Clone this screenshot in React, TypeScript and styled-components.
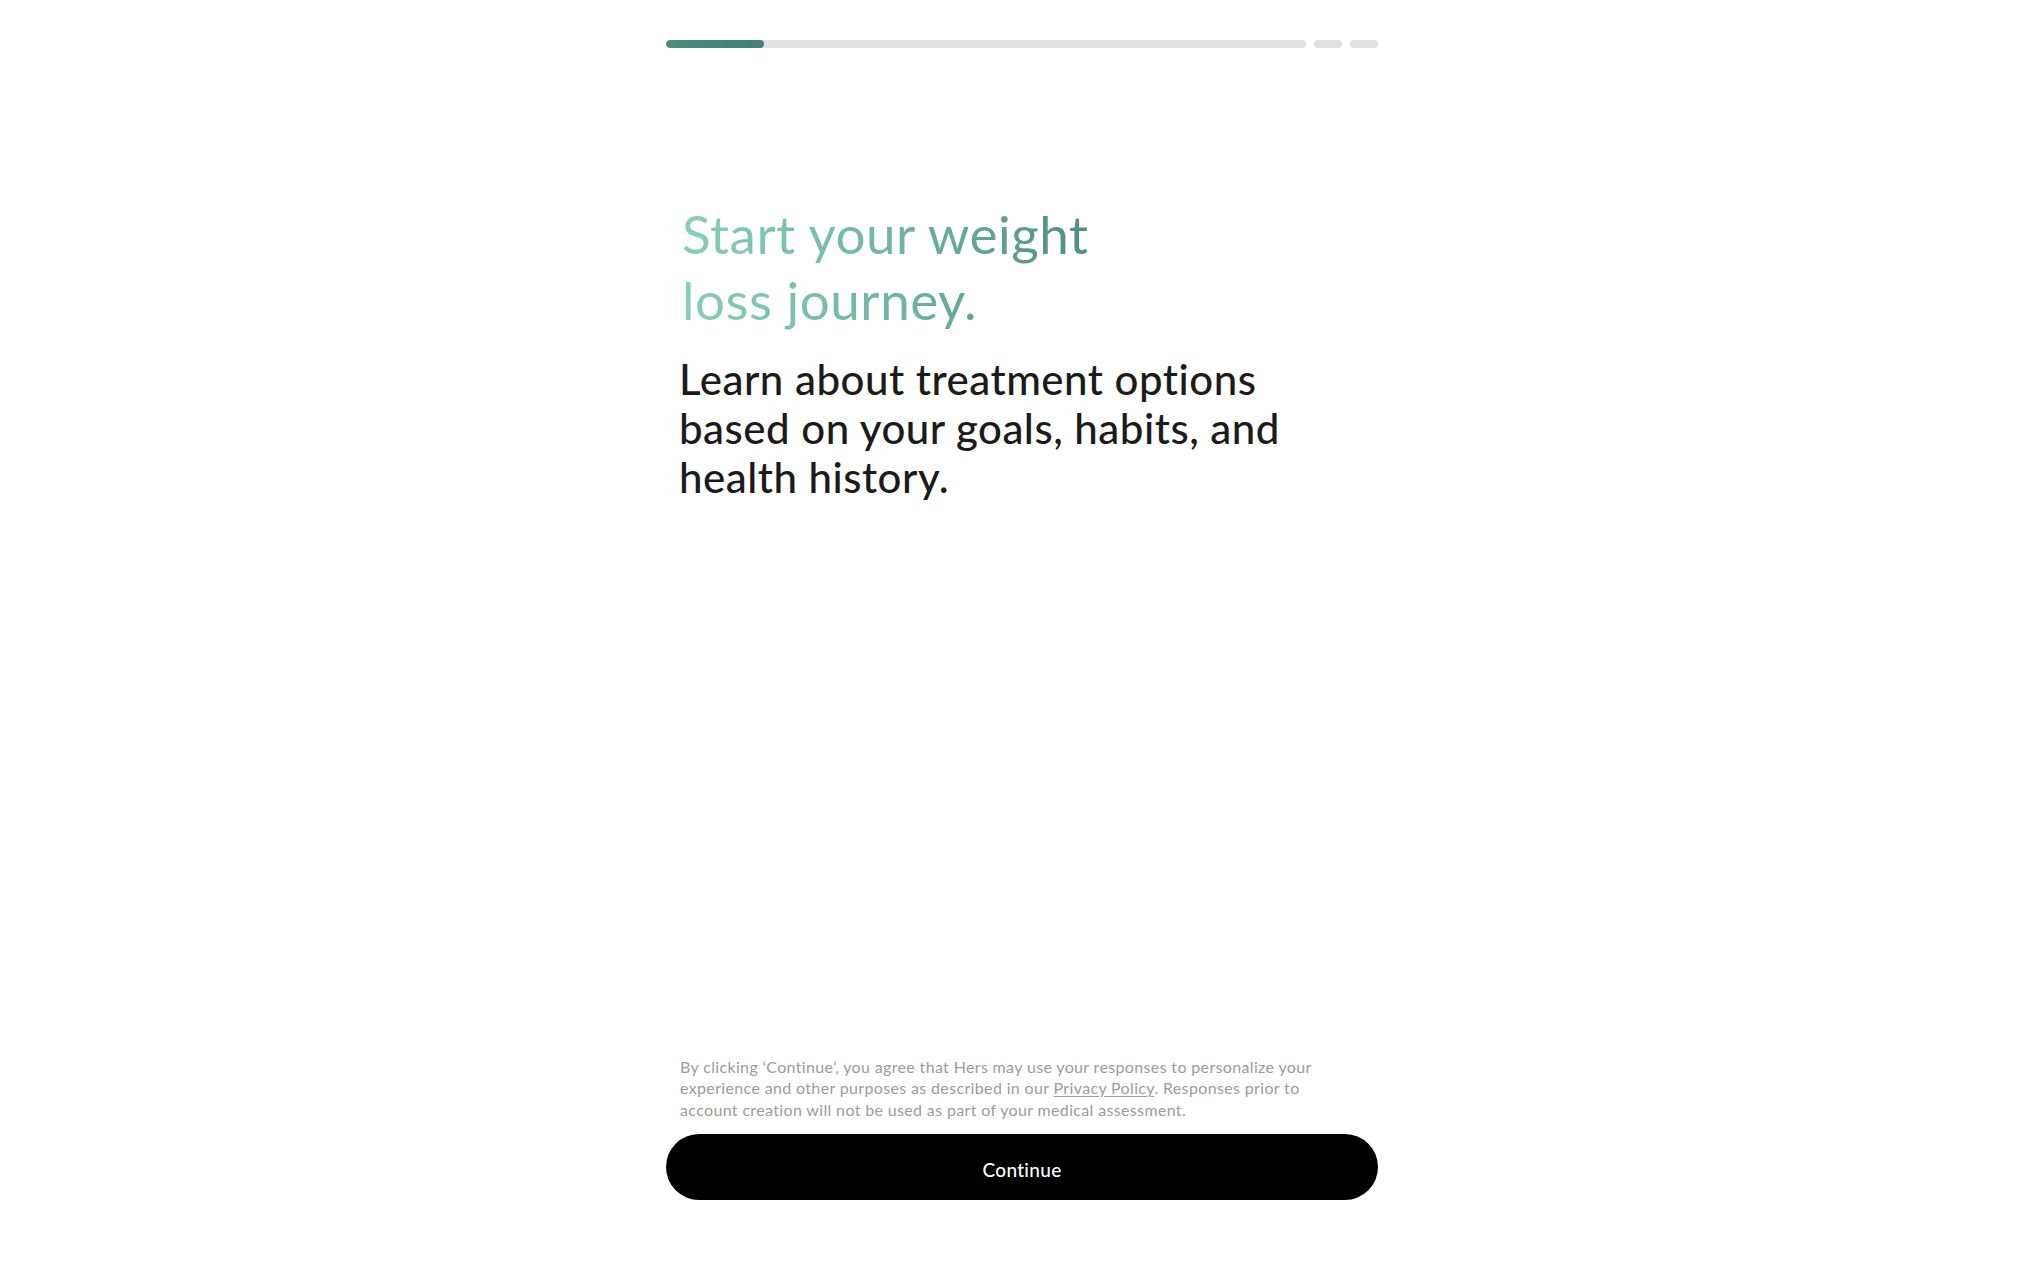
import React from "react";
import styled, { createGlobalStyle } from "styled-components";

const GlobalStyle = createGlobalStyle`
  html, body, #root {
    margin: 0;
    padding: 0;
    height: 100%;
    background: #ffffff;
  }
  body {
    font-family: Lato, "Noto Sans", sans-serif;
    -webkit-font-smoothing: antialiased;
  }
`;

const Page = styled.div`
  display: flex;
  justify-content: center;
  height: 100vh;
`;

const Column = styled.div`
  display: flex;
  flex-direction: column;
  width: 712px;
  height: 100%;
`;

const Progress = styled.div`
  display: flex;
  gap: 8px;
  margin-top: 40px;
`;

const Segment = styled.div<{ $grow?: boolean }>`
  position: relative;
  height: 8px;
  border-radius: 4px;
  background: #e1e1e1;
  overflow: hidden;
  flex: ${(p) => (p.$grow ? "1 1 auto" : "0 0 28px")};
`;

const Fill = styled.div`
  height: 100%;
  border-radius: 4px;
  background: linear-gradient(90deg, #4d8c82, #447f77);
`;

const Content = styled.div`
  padding: 0 16px;
`;

const Heading = styled.h1`
  display: inline-block;
  margin: 153px 0 0;
  font-size: 53px;
  line-height: 66px;
  font-weight: 400;
  letter-spacing: 0.5px;
  background: linear-gradient(90deg, #88ceb8 0%, #6fb3a4 55%, #4f8d86 100%);
  -webkit-background-clip: text;
  background-clip: text;
  color: transparent;
`;

const Lead = styled.p`
  margin: 22px 0 0 -3px;
  font-size: 42px;
  line-height: 49px;
  font-weight: 500;
  color: #1b1b1b;
  letter-spacing: 0.5px;
`;

const Spacer = styled.div`
  flex: 1;
`;

const Legal = styled.p`
  margin: 0 0 14px;
  padding: 0 30px 0 14px;
  font-size: 16px;
  line-height: 21.5px;
  letter-spacing: 0.35px;
  color: #9c9c9c;
`;

const LegalLink = styled.a`
  color: inherit;
  text-decoration: underline;
  text-underline-offset: 2px;
`;

const ContinueButton = styled.button`
  height: 66px;
  margin-bottom: 66px;
  padding: 4px 0 0;
  border: none;
  border-radius: 33px;
  background: #000000;
  color: #ffffff;
  font-family: inherit;
  font-size: 19px;
  font-weight: 500;
  letter-spacing: 0.3px;
  cursor: pointer;
`;

const App: React.FC = () => {
  const progress = 98;

  return (
    <>
      <GlobalStyle />
      <Page>
        <Column>
          <Progress>
            <Segment $grow>
              <Fill style={{ width: `${progress}px` }} />
            </Segment>
            <Segment />
            <Segment />
          </Progress>
          <Content>
            <Heading>
              Start your weight
              <br />
              loss journey.
            </Heading>
            <Lead>
              Learn about treatment options
              <br />
              based on your goals, habits, and
              <br />
              health history.
            </Lead>
          </Content>
          <Spacer />
          <Legal>
            By clicking ‘Continue’, you agree that Hers may use your responses
            to personalize your experience and other purposes as described in
            our <LegalLink href="#">Privacy Policy</LegalLink>. Responses prior
            to account creation will not be used as part of your medical
            assessment.
          </Legal>
          <ContinueButton>Continue</ContinueButton>
        </Column>
      </Page>
    </>
  );
};

export default App;
